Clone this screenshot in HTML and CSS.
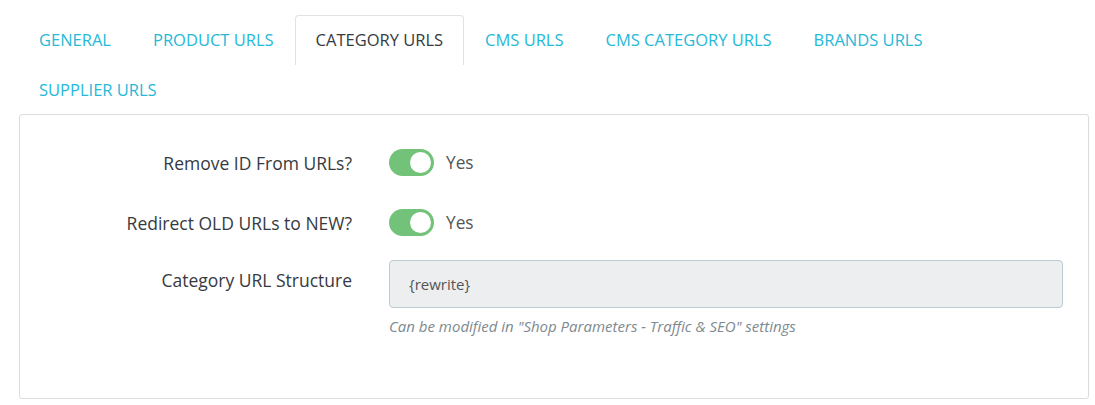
FILE: index.html
```html
<!DOCTYPE html>
<html lang="en">
<head>
  <meta charset="UTF-8">
  <title>SEO URLs</title>
  <link rel="stylesheet" href="styles.css">
</head>
<body>
  <div class="wrapper">
    <ul class="tabs">
      <li><a href="#">GENERAL</a></li>
      <li><a href="#">PRODUCT URLS</a></li>
      <li class="active"><a href="#">CATEGORY URLS</a></li>
      <li><a href="#">CMS URLS</a></li>
      <li><a href="#">CMS CATEGORY URLS</a></li>
      <li><a href="#">BRANDS URLS</a></li>
      <li><a href="#">SUPPLIER URLS</a></li>
    </ul>

    <div class="panel">
      <div class="row">
        <label class="row-label">Remove ID From URLs?</label>
        <div class="row-control">
          <span class="switch"><span class="knob"></span></span>
          <span class="switch-text">Yes</span>
        </div>
      </div>

      <div class="row">
        <label class="row-label">Redirect OLD URLs to NEW?</label>
        <div class="row-control">
          <span class="switch"><span class="knob"></span></span>
          <span class="switch-text">Yes</span>
        </div>
      </div>

      <div class="row row-top">
        <label class="row-label" for="cat-url">Category URL Structure</label>
        <div class="row-control-block">
          <input type="text" id="cat-url" value="{rewrite}" readonly>
          <p class="help">Can be modified in "Shop Parameters - Traffic &amp; SEO" settings</p>
        </div>
      </div>
    </div>
  </div>
</body>
</html>
```

FILE: styles.css
```css
body {
  margin: 0;
  background: #fff;
  font-family: "Open Sans", "Liberation Sans", sans-serif;
  color: #363a41;
}

.wrapper {
  padding: 15px 6px 0 18px;
}

/* tabs */
.tabs {
  list-style: none;
  margin: 0 0 -1px 0;
  padding: 0;
  display: flex;
  flex-wrap: wrap;
}

.tabs li a {
  display: block;
  padding: 14px 20px 15px;
  line-height: 20px;
  font-size: 16.5px;
  color: #25b9d7;
  text-decoration: none;
  border: 1px solid transparent;
  border-bottom: 0;
  border-radius: 4px 4px 0 0;
}

.tabs li.active a {
  color: #363a41;
  background: #fff;
  border-color: #e2e2e2;
}

/* panel */
.panel {
  margin-left: 1px;
  border: 1px solid #dcdcdc;
  border-radius: 3px;
  padding: 34px 25px 62px 0;
  box-shadow: 0 1px 1px rgba(0, 0, 0, 0.04);
}

.row {
  display: grid;
  grid-template-columns: 332px 1fr;
  column-gap: 37px;
  align-items: center;
  min-height: 27px;
  margin-bottom: 33px;
}

.row + .row + .row {
  margin-bottom: 0;
}

.row:nth-child(2) {
  margin-bottom: 24px;
}

.row-top {
  align-items: start;
}

.row-label {
  text-align: right;
  font-size: 17.5px;
  line-height: 20px;
}

.row-top .row-label {
  padding-top: 10px;
}

.row-control {
  display: flex;
  align-items: center;
}

.switch {
  position: relative;
  display: inline-block;
  width: 45px;
  height: 27px;
  border-radius: 14px;
  background: #72c279;
}

.knob {
  position: absolute;
  top: 3px;
  right: 3px;
  width: 21px;
  height: 21px;
  border-radius: 50%;
  background: #fff;
}

.switch-text {
  margin-left: 12px;
  font-size: 17.3px;
  color: #555;
}

input {
  display: block;
  width: 100%;
  height: 48px;
  box-sizing: border-box;
  padding: 0 19px;
  font-family: "Open Sans", "Liberation Sans", sans-serif;
  font-size: 15px;
  color: #555;
  background: #eceeef;
  border: 1px solid #bbcdd2;
  border-radius: 4px;
  outline: none;
}

.help {
  margin: 8px 0 0 0;
  font-size: 15px;
  line-height: 20px;
  font-style: italic;
  color: #7d8a8f;
}
```
